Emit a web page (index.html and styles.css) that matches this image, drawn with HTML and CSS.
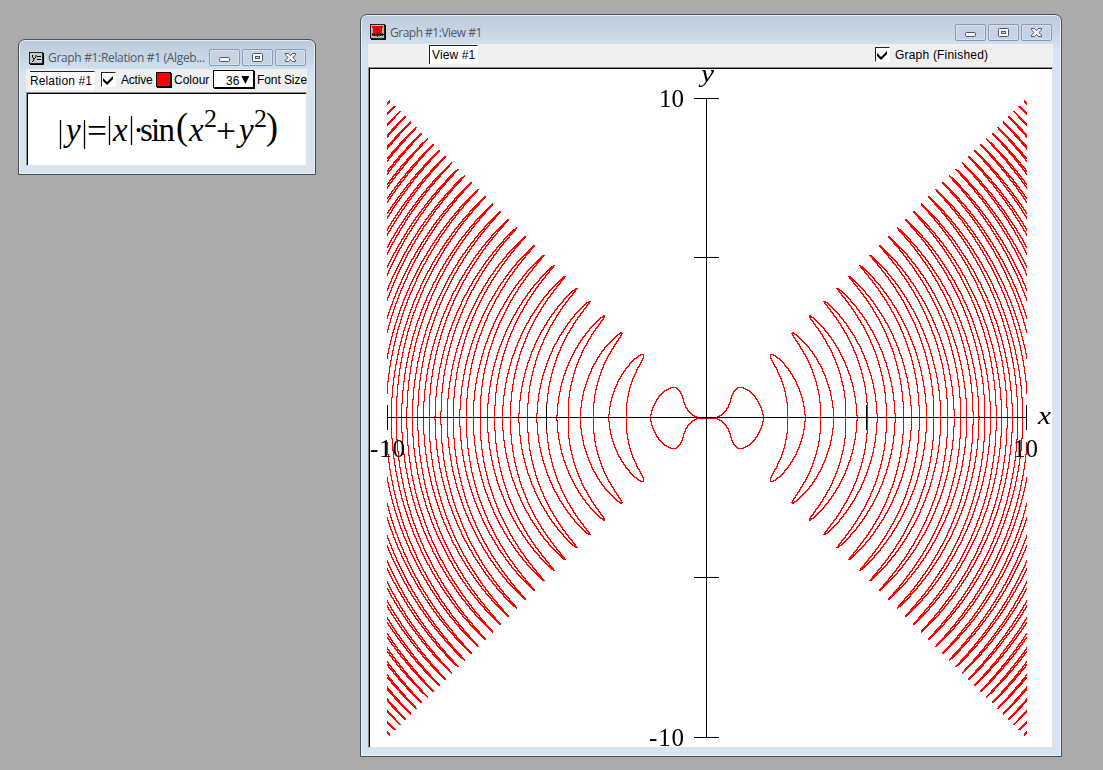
FILE: index.html
```html
<!DOCTYPE html>
<html lang="en">
<head>
<meta charset="utf-8">
<title>Graph #1</title>
<link rel="stylesheet" href="styles.css">
</head>
<body>
<svg class="defs" width="0" height="0">
  <symbol id="min" viewBox="0 0 29 15"><rect x="9.500" y="7.500" width="10" height="4" rx="1" fill="#f6f6f6" stroke="#545765"/></symbol>
  <symbol id="max" viewBox="0 0 29 15"><rect x="9.500" y="3.500" width="10" height="8" rx="1" fill="#f6f6f6" stroke="#545765"/><rect x="12.500" y="6.500" width="4" height="2" fill="#c5d3e2" stroke="#545765"/></symbol>
  <symbol id="close" viewBox="0 0 29 15"><path d="M9.500 3.500h3l2 2.200 2-2.200h3v1.500l-2.700 2.500 2.700 2.500v1.500h-3l-2-2.200-2 2.200h-3v-1.500l2.700-2.500-2.700-2.500z" fill="#f6f6f6" stroke="#545765"/></symbol>
  <symbol id="check" viewBox="0 0 13 13"><path d="M1 5l4 4 6-6v3l-6 6-4-4z" fill="#000"/></symbol>
</svg>

<section class="window relation">
  <header class="titlebar">
    <svg class="app-icon" width="15" height="13" viewBox="0 0 15 13"><rect x=".5" y=".5" width="13" height="11" fill="#c8c8c8" stroke="#222"/><path d="M14.500 1v11.500H1" fill="none" stroke="#000"/><path d="M3.500 3v2l1.500 2 2-2V3M5.500 6l-1.500 3.500H3M8 4.500h4M8 7.500h4" fill="none" stroke="#000"/></svg>
    <h1 class="title">Graph #1:Relation #1 (Algeb...</h1>
    <div class="controls"><svg class="control"><use href="#min"/></svg><svg class="control"><use href="#max"/></svg><svg class="control"><use href="#close"/></svg></div>
  </header>
  <div class="toolbar">
    <span class="field name-field">Relation #1</span>
    <svg class="checkbox"><use href="#check"/></svg>
    <span class="active-label">Active</span>
    <span class="swatch"></span>
    <span class="colour-label">Colour</span>
    <span class="size-select">36<i class="arrow"></i></span>
    <span class="size-label">Font Size</span>
  </div>
  <div class="pane">
    <svg class="formula" width="278" height="71" viewBox="28 94 278 71">
      <g class="math">
        <text class="it" x="66" y="141" textLength="15">y</text>
        <text x="87" y="142" textLength="20" lengthAdjust="spacingAndGlyphs">=</text>
        <text class="it" x="113" y="141">x</text>
        <text x="133" y="141">·</text>
        <text x="140" y="141" textLength="35">sin</text>
        <text class="paren" x="176" y="139" textLength="12" lengthAdjust="spacingAndGlyphs">(</text>
        <text class="it" x="189" y="141">x</text>
        <text class="sup" x="204" y="127">2</text>
        <text x="216" y="142" textLength="20" lengthAdjust="spacingAndGlyphs">+</text>
        <text class="it" x="239" y="141">y</text>
        <text class="sup" x="254" y="127">2</text>
        <text class="paren" x="266" y="139" textLength="12" lengthAdjust="spacingAndGlyphs">)</text>
      </g>
      <path d="M60.500 120v29M84.500 120v29M109.500 116v29M131.500 116v29" stroke="#000" stroke-width="1.300"/>
    </svg>
  </div>
</section>

<section class="window view">
  <header class="titlebar">
    <svg class="app-icon" width="16" height="16" viewBox="0 0 16 16"><rect x=".5" y=".5" width="14" height="14" fill="#b4b4b4" stroke="#222"/><path d="M15.500 1v14.500H1" fill="none" stroke="#000"/><path d="M2 2h11v2h-1v5h1v3H2V9h1V4H2z" fill="#f00"/><path d="M7.500 3v10M2 10.500h12M4.500 9v3M10.500 9v3M6 5.500h3" stroke="#000" fill="none"/></svg>
    <h1 class="title">Graph #1:View #1</h1>
    <div class="controls"><svg class="control"><use href="#min"/></svg><svg class="control"><use href="#max"/></svg><svg class="control"><use href="#close"/></svg></div>
  </header>
  <div class="toolbar">
    <span class="field view-field">View #1</span>
    <svg class="checkbox"><use href="#check"/></svg>
    <span class="graph-label">Graph (Finished)</span>
  </div>
  <div class="pane">
    <div class="plot">
      <canvas id="graph" width="682" height="677"></canvas>
      <svg class="labels" width="682" height="677" viewBox="370 70 682 677">
        <text class="it" x="701" y="82" textLength="13" lengthAdjust="spacingAndGlyphs">y</text>
        <text class="it" x="1038" y="424" textLength="13" lengthAdjust="spacingAndGlyphs">x</text>
        <text x="659" y="107" textLength="25">10</text>
        <text x="649" y="746" textLength="35">-10</text>
        <text x="370" y="457" textLength="35">-10</text>
        <text x="1013" y="457" textLength="25">10</text>
      </svg>
    </div>
  </div>
</section>
<script src="graph.js"></script>
</body>
</html>
```
FILE: styles.css
```css
* { box-sizing: border-box; }
body {
  margin: 0;
  width: 1103px;
  height: 770px;
  overflow: hidden;
  background: #ababab;
  font: 12px/14px "Liberation Sans", Arial, sans-serif;
  color: #000;
}
.defs { position: absolute; }
.window {
  position: absolute;
  display: flex;
  flex-direction: column;
  border: 1px solid #4b4e54;
  border-radius: 7px 7px 0 0;
  background: linear-gradient(#bccbdc 0, #c5d3e2 14px, #d7e4f2 36px, #d7e4f2 100%);
  box-shadow: inset 0 0 0 1px #e6eef7;
}
.relation { left: 18px; top: 39px; width: 298px; height: 136px; padding: 0 8px 8px 7px; }
.view { left: 360px; top: 14px; width: 702px; height: 743px; padding: 0 8px 8px 7px; }
.titlebar { display: flex; flex: none; align-items: flex-start; height: 29px; }
.app-icon { flex: none; }
.relation .app-icon { margin: 12px 0 0 3px; }
.view .app-icon { margin: 9px 0 0 2px; }
.title {
  margin: 10px 0 0 4px;
  font: 12px/16px "Open Sans", "Noto Sans", sans-serif;
  color: #525a66;
  white-space: nowrap;
  letter-spacing: -.5px;
}
.relation .title { width: 159px; letter-spacing: -.33px; }
.controls { display: flex; gap: 2px; margin: 9px 1px 0 auto; }
.control {
  width: 31px;
  height: 17px;
  border: 1px solid #8a9bb6;
  border-radius: 2px;
  background: #c5d3e2;
  box-shadow: inset 0 0 0 1px #d6e1ed;
}
.toolbar { display: flex; flex: none; align-items: flex-start; height: 23px; background: #efefef; white-space: nowrap; }
.relation .toolbar { padding-top: 2px; }
.view .toolbar { padding-top: 1px; }
.field {
  height: 19px;
  padding: 2px 0 0 2px;
  border-top: 1px solid #222;
  border-right: 1px solid #fff;
  background: #fff;
}
.name-field { width: 65px; margin-left: 4px; padding-left: 0; letter-spacing: .12px; }
.view-field { width: 49px; margin-left: 61px; border-left: 1px solid #222; letter-spacing: .1px; }
.checkbox { flex: none; width: 15px; height: 15px; background: #fff; border: 1px solid #fff; border-top-color: #222; border-left-color: #222; }
.relation .checkbox { margin: 1px 0 0 6px; }
.view .checkbox { margin: 2px 0 0 397px; }
.active-label { margin: 2px 0 0 5px; width: 35px; letter-spacing: -.2px; }
.swatch { width: 15px; height: 15px; margin-top: 1px; border: 1px solid #000; background: #f00; box-shadow: 1px 1px #000; }
.colour-label { margin: 2px 0 0 3px; width: 39px; }
.size-select { display: flex; width: 41px; height: 18px; margin-top: -1px; padding: 3px 0 0 12px; border: 1px solid #000; background: #fff; box-shadow: 1px 1px #000; }
.arrow { width: 8px; height: 8px; margin: 2px 0 0 2px; background: #000; clip-path: polygon(0 0, 100% 0, 50% 100%); }
.size-label { margin: 2px 0 0 3px; letter-spacing: -.08px; }
.graph-label { margin: 3px 0 0 5px; letter-spacing: .2px; }
.pane {
  flex: 1;
  border: 1px solid #e4e0e0;
  border-top-color: #8c8c8c;
  border-left-color: #8c8c8c;
  background: #fff;
  box-shadow: inset 1px 1px #000;
  padding: 1px 0 0 1px;
}
.formula { display: block; }
.math { font: 33px "Liberation Serif", serif; }
.it { font-style: italic; }
.sup { font-size: 26px; }
.paren { font-size: 37px; }
.plot { display: grid; margin-top: 1px; }
.plot > * { grid-area: 1 / 1; display: block; }
.labels { font: 25px "Liberation Serif", serif; }
```
FILE: graph.js
```javascript
const canvas = document.getElementById('graph');
const ctx = canvas.getContext('2d');
const scale = 32;
const cx = 337;
const cy = 348;
const steps = 14;

function relation(x, y) {
  return Math.abs(y) - Math.abs(x) * Math.sin(x * x + y * y);
}

// A pixel is on the curve when the relation changes sign inside it.
function crosses(px, py) {
  let below = false;
  let above = false;
  for (let i = 0; i <= steps; i++) {
    for (let j = 0; j <= steps; j++) {
      const v = relation((px + i / steps) / scale, (py + j / steps) / scale);
      if (v < 0) below = true;
      else above = true;
      if (below && above) return true;
    }
  }
  return false;
}

ctx.fillStyle = '#f00';
for (let py = -320; py < 320; py++) {
  for (let px = -320; px < 320; px++) {
    if (Math.abs(py) <= Math.abs(px) + 2 && crosses(px, py)) {
      ctx.fillRect(cx + px, cy + py, 1, 1);
    }
  }
}

ctx.fillStyle = '#000';
ctx.fillRect(17, 347, 640, 1);
ctx.fillRect(336, 28, 1, 640);
for (const x of [17, 176, 496, 656]) ctx.fillRect(x, 335, 1, 25);
for (const y of [28, 187, 507, 667]) ctx.fillRect(324, y, 25, 1);
```
